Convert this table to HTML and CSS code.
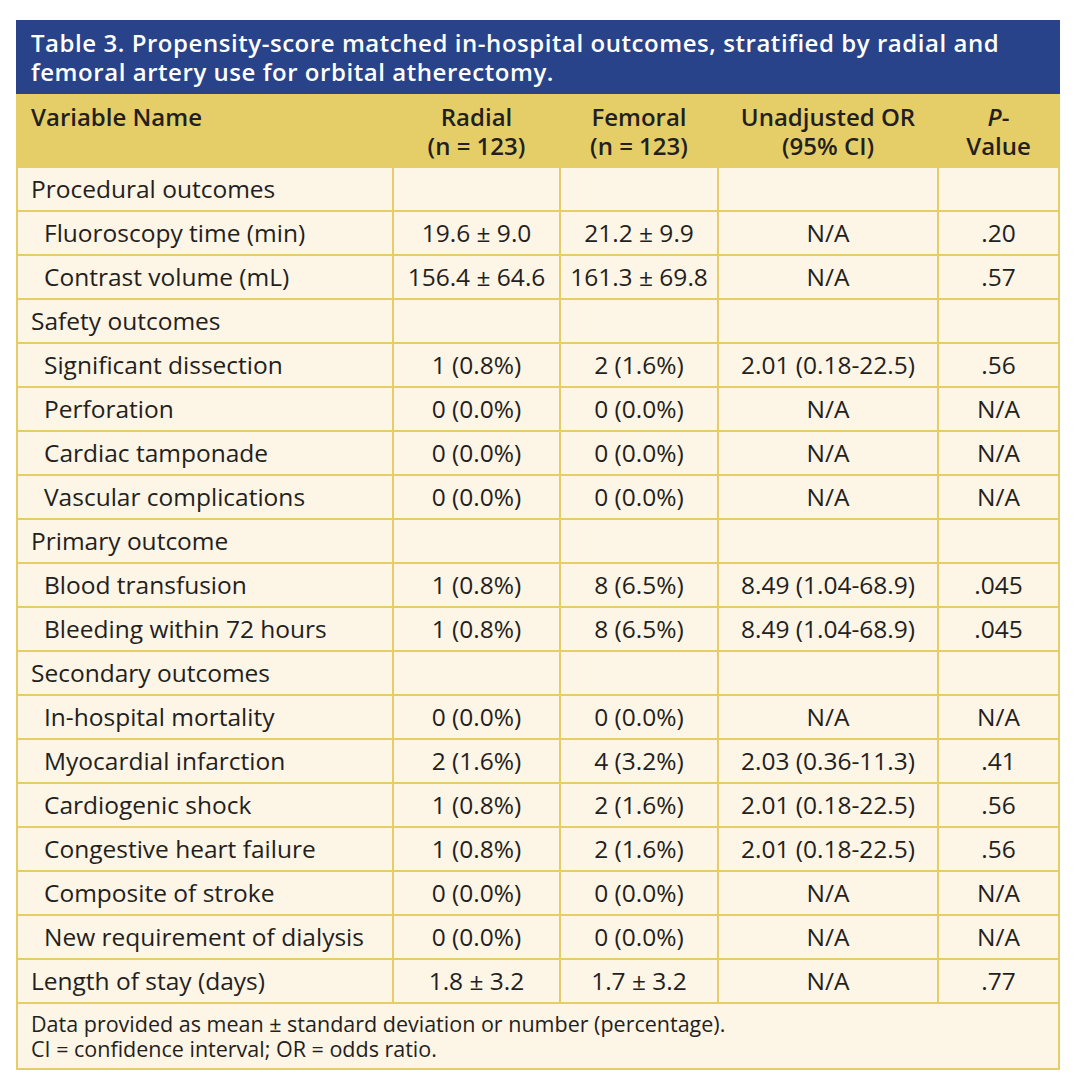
FILE: index.html
```html
<!DOCTYPE html>
<html lang="en">
<head>
<meta charset="utf-8">
<title>Table 3</title>
<link rel="stylesheet" href="styles.css">
</head>
<body>
<div class="wrap">
  <div class="caption">Table 3. Propensity-score matched in-hospital outcomes, stratified by radial and femoral artery use for orbital atherectomy.</div>
  <table class="data">
    <colgroup>
      <col class="c1"><col class="c2"><col class="c3"><col class="c4"><col class="c5">
    </colgroup>
    <thead>
      <tr>
        <th class="left">Variable Name</th>
        <th>Radial<br>(n = 123)</th>
        <th>Femoral<br>(n = 123)</th>
        <th>Unadjusted OR<br>(95% CI)</th>
        <th><i>P</i>-<br>Value</th>
      </tr>
    </thead>
    <tbody>
      <tr><td class="left">Procedural outcomes</td><td></td><td></td><td></td><td></td></tr>
      <tr><td class="left sub">Fluoroscopy time (min)</td><td>19.6 ± 9.0</td><td>21.2 ± 9.9</td><td>N/A</td><td>.20</td></tr>
      <tr><td class="left sub">Contrast volume (mL)</td><td>156.4 ± 64.6</td><td>161.3 ± 69.8</td><td>N/A</td><td>.57</td></tr>
      <tr><td class="left">Safety outcomes</td><td></td><td></td><td></td><td></td></tr>
      <tr><td class="left sub">Significant dissection</td><td>1 (0.8%)</td><td>2 (1.6%)</td><td>2.01 (0.18-22.5)</td><td>.56</td></tr>
      <tr><td class="left sub">Perforation</td><td>0 (0.0%)</td><td>0 (0.0%)</td><td>N/A</td><td>N/A</td></tr>
      <tr><td class="left sub">Cardiac tamponade</td><td>0 (0.0%)</td><td>0 (0.0%)</td><td>N/A</td><td>N/A</td></tr>
      <tr><td class="left sub">Vascular complications</td><td>0 (0.0%)</td><td>0 (0.0%)</td><td>N/A</td><td>N/A</td></tr>
      <tr><td class="left">Primary outcome</td><td></td><td></td><td></td><td></td></tr>
      <tr><td class="left sub">Blood transfusion</td><td>1 (0.8%)</td><td>8 (6.5%)</td><td>8.49 (1.04-68.9)</td><td>.045</td></tr>
      <tr><td class="left sub">Bleeding within 72 hours</td><td>1 (0.8%)</td><td>8 (6.5%)</td><td>8.49 (1.04-68.9)</td><td>.045</td></tr>
      <tr><td class="left">Secondary outcomes</td><td></td><td></td><td></td><td></td></tr>
      <tr><td class="left sub">In-hospital mortality</td><td>0 (0.0%)</td><td>0 (0.0%)</td><td>N/A</td><td>N/A</td></tr>
      <tr><td class="left sub">Myocardial infarction</td><td>2 (1.6%)</td><td>4 (3.2%)</td><td>2.03 (0.36-11.3)</td><td>.41</td></tr>
      <tr><td class="left sub">Cardiogenic shock</td><td>1 (0.8%)</td><td>2 (1.6%)</td><td>2.01 (0.18-22.5)</td><td>.56</td></tr>
      <tr><td class="left sub">Congestive heart failure</td><td>1 (0.8%)</td><td>2 (1.6%)</td><td>2.01 (0.18-22.5)</td><td>.56</td></tr>
      <tr><td class="left sub">Composite of stroke</td><td>0 (0.0%)</td><td>0 (0.0%)</td><td>N/A</td><td>N/A</td></tr>
      <tr><td class="left sub">New requirement of dialysis</td><td>0 (0.0%)</td><td>0 (0.0%)</td><td>N/A</td><td>N/A</td></tr>
      <tr><td class="left">Length of stay (days)</td><td>1.8 ± 3.2</td><td>1.7 ± 3.2</td><td>N/A</td><td>.77</td></tr>
    </tbody>
    <tfoot>
      <tr><td colspan="5" class="note">Data provided as mean ± standard deviation or number (percentage).<br>CI = confidence interval; OR = odds ratio.</td></tr>
    </tfoot>
  </table>
</div>
</body>
</html>
```

FILE: styles.css
```css
html, body {
  margin: 0;
  padding: 0;
  background: #ffffff;
}

body {
  font-family: "Open Sans", "Liberation Sans", sans-serif;
  color: #231f20;
}

.wrap {
  padding: 20px 16px;
  width: 1044px;
}

.caption {
  background: #284389;
  color: #ffffff;
  font-weight: 600;
  font-size: 24px;
  letter-spacing: 0.55px;
  line-height: 29px;
  padding: 8px 15px 8px 15px;
}

.data {
  width: 1044px;
  table-layout: fixed;
  border-collapse: separate;
  border-spacing: 0;
  border-left: 2px solid #e6cd6a;
  font-size: 24.5px;
}

.c1 { width: 376px; }
.c2 { width: 167px; }
.c3 { width: 158px; }
.c4 { width: 220px; }
.c5 { width: 121px; }

.data th {
  background: #e5ce68;
  font-size: 24px;
  font-weight: 600;
  line-height: 29px;
  padding: 8px 4px 8px 4px;
  text-align: center;
  vertical-align: top;
  border-right: 2px solid #e5ce68;
}

.data th.left {
  text-align: left;
  padding-left: 13px;
}

.data td {
  background: #fdf5e6;
  line-height: 28px;
  padding: 7px 4px;
  text-align: center;
  vertical-align: middle;
  white-space: nowrap;
  border-right: 2px solid #e6cd6a;
  border-bottom: 2px solid #e6cd6a;
}

.data td.left {
  text-align: left;
  padding-left: 13px;
}

.data td.sub {
  padding-left: 26px;
}

.data td.note {
  text-align: left;
  font-size: 21.5px;
  line-height: 25px;
  padding: 7px 13px 7px 13px;
}
```
